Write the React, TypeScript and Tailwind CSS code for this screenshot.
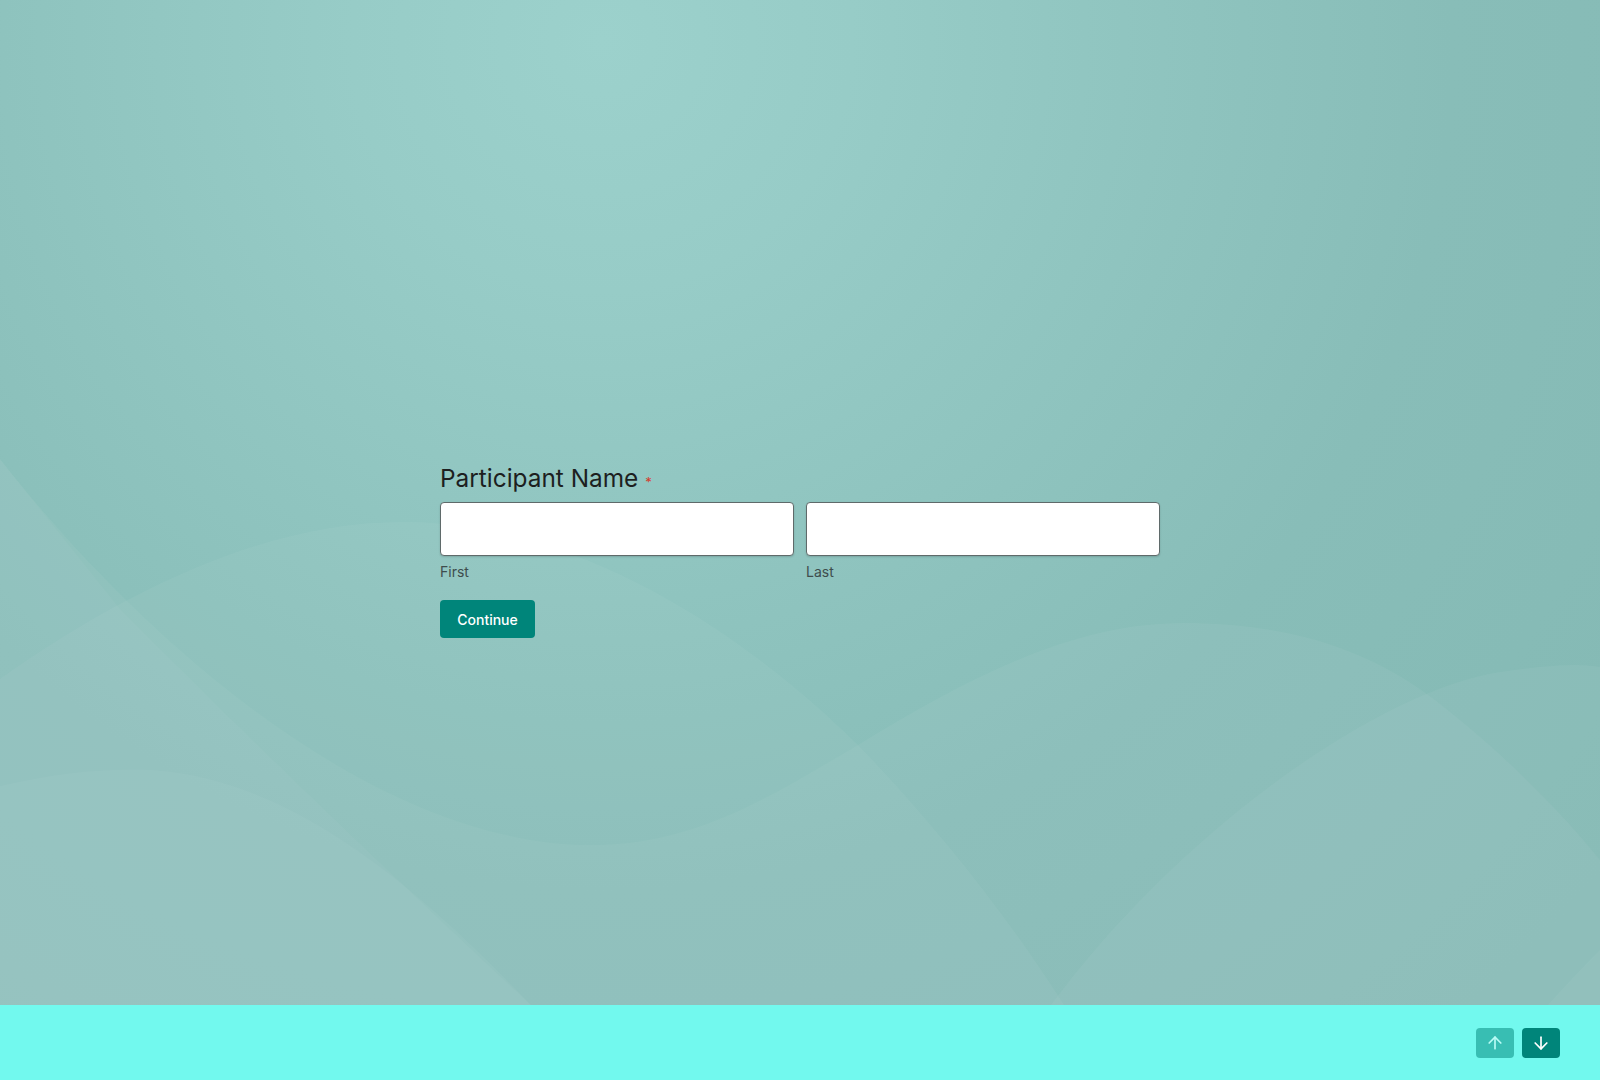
import React from "react";
import { ArrowUp, ArrowDown } from "lucide-react";

function Waves() {
  return (
    <svg
      className="pointer-events-none absolute inset-0 h-full w-full"
      viewBox="0 0 1600 1005"
      preserveAspectRatio="none"
      aria-hidden="true"
    >
      <g fill="#ffffff">
        {/* wave B: trough left, crest right */}
        <path
          fillOpacity="0.045"
          d="M0,459 C150,650 380,845 592,845 C700,845 780,790 858,745 C980,670 1080,623 1183,623 C1290,623 1370,650 1435,700 C1500,750 1560,810 1600,860 L1600,1005 L0,1005 Z"
        />
        {/* wave A: arch on the left */}
        <path
          fillOpacity="0.045"
          d="M0,679 C140,580 280,520 408,522 C560,524 720,610 858,745 C940,830 1010,920 1064,1005 L0,1005 Z"
        />
        {/* diagonal on the left */}
        <path
          fillOpacity="0.03"
          d="M0,459 L120,609 Q300,790 531,1005 L0,1005 Z"
        />
        {/* wave D: lower left */}
        <path
          fillOpacity="0.035"
          d="M0,786 C60,772 110,768 153,770 C300,780 430,900 531,1005 L0,1005 Z"
        />
        {/* wave C: right */}
        <path
          fillOpacity="0.045"
          d="M1051,1005 C1180,830 1380,690 1500,672 C1540,666 1560,665 1575,665 C1585,665 1595,666 1600,667 L1600,1005 Z"
        />
        {/* small corner */}
        <path fillOpacity="0.04" d="M1548,1005 Q1575,975 1600,950 L1600,1005 Z" />
      </g>
    </svg>
  );
}

export default function App() {
  return (
    <div className="flex h-[1080px] w-full flex-col overflow-hidden font-['Inter','Noto_Sans',sans-serif]">
      <main className="relative flex-1 bg-[radial-gradient(circle_at_602px_41px,#9cd1cc_0px,#97ccc7_250px,#8ec3be_600px,#88bdb8_850px,#86bbb6_1100px,#84b9b4_1300px)]">
        <Waves />
        <div className="relative mx-auto w-[720px] pt-[462px]">
          <h1 className="flex items-baseline text-[24.4px] leading-[32px] font-normal text-[#1d1f1f]">
            <span>Participant Name</span>
            <span className="ml-[7px] text-[13px] leading-none text-[#d63a2c]">*</span>
          </h1>
          <div className="mt-[8px] grid grid-cols-2 gap-3">
            <div className="flex flex-col">
              <input
                type="text"
                aria-label="First"
                className="h-[54px] w-full rounded-[4px] border border-[#5f6a6a] bg-white shadow-[0_1px_2px_rgba(0,0,0,0.15)] outline-none"
              />
              <label className="mt-[6px] text-[14px] leading-[20px] text-[#3e4d4d]">First</label>
            </div>
            <div className="flex flex-col">
              <input
                type="text"
                aria-label="Last"
                className="h-[54px] w-full rounded-[4px] border border-[#5f6a6a] bg-white shadow-[0_1px_2px_rgba(0,0,0,0.15)] outline-none"
              />
              <label className="mt-[6px] text-[14px] leading-[20px] text-[#3e4d4d]">Last</label>
            </div>
          </div>
          <button className="mt-[18px] h-[38px] w-[95px] rounded-[4px] bg-[#00857a] text-[14px] font-medium text-white">
            Continue
          </button>
        </div>
      </main>

      <footer className="flex h-[75px] items-center justify-end gap-2 bg-[#72f9ee] pr-10">
        <button className="flex h-[30px] w-[38px] items-center justify-center rounded-[4px] bg-[#00857a] opacity-50">
          <ArrowUp size={20} strokeWidth={2} className="text-white" />
        </button>
        <button className="flex h-[30px] w-[38px] items-center justify-center rounded-[4px] bg-[#00857a]">
          <ArrowDown size={20} strokeWidth={2} className="text-white" />
        </button>
      </footer>
    </div>
  );
}
